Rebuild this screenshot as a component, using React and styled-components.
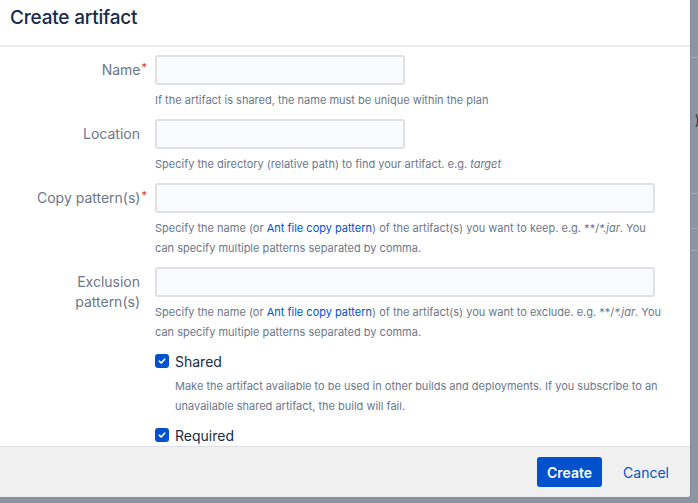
import styled, { createGlobalStyle } from "styled-components";

const GlobalStyle = createGlobalStyle`
  html, body {
    margin: 0;
    padding: 0;
    height: 100%;
    overflow: hidden;
  }
  body {
    font-family: Inter, "Noto Sans", "Liberation Sans", sans-serif;
    background: #ffffff;
  }
`;

/* page that sits behind the dimmed overlay */
const Backdrop = styled.div`
  position: fixed;
  inset: 0;
  background: #8d94a2;
  display: flex;
  flex-direction: column;
  align-items: flex-end;
`;

const BackRow = styled.div`
  width: 60px;
  height: ${(p) => p.h}px;
  box-sizing: border-box;
  border-bottom: 1px solid ${(p) => (p.line ? "#a0a6b1" : "transparent")};
  color: #2f3746;
  font-size: 14px;
  line-height: ${(p) => p.h}px;
  text-align: right;
  overflow: hidden;
  white-space: nowrap;
  margin-right: -6px;
`;

const Dialog = styled.div`
  position: fixed;
  left: 0;
  top: 0;
  width: 690px;
  height: 497px;
  background: #ffffff;
  border-bottom-right-radius: 3px;
  box-shadow: 0 0 2px rgba(9, 30, 66, 0.25);
  display: flex;
  flex-direction: column;
  overflow: hidden;
`;

const Header = styled.div`
  flex: none;
  height: 47px;
  padding: 6px 10px 0;
  box-sizing: border-box;
  border-bottom: 2px solid #ebecf0;
`;

const Title = styled.h1`
  margin: 0;
  font-size: 19px;
  line-height: 24px;
  font-weight: 500;
  color: #172b4d;
  letter-spacing: -0.2px;
`;

const Body = styled.div`
  flex: 1;
  overflow: hidden;
  padding: 8px 0 0;
`;

const FieldRow = styled.div`
  display: grid;
  grid-template-columns: 118px 512px;
  column-gap: 15px;
  padding-left: 22px;
  margin-bottom: 9px;
`;

const Label = styled.label`
  text-align: right;
  font-size: 14px;
  line-height: 20px;
  color: #6b778c;
  padding-top: 5px;
`;

const Req = styled.span`
  color: #de350b;
  font-size: 11px;
  vertical-align: top;
  line-height: 14px;
  margin-right: -7px;
  margin-left: 1px;
`;

const Input = styled.input`
  display: block;
  box-sizing: border-box;
  width: ${(p) => (p.wide ? 500 : 250)}px;
  height: 30px;
  margin: 0;
  background: #fafbfc;
  border: 2px solid #dfe1e6;
  border-radius: 3px;
  font: inherit;
  font-size: 14px;
  outline: none;
`;

const Help = styled.div`
  margin-top: 5px;
  font-size: 11px;
  line-height: 20px;
  color: #6b778c;
  padding-left: ${(p) => (p.indent ? 20 : 0)}px;

  a {
    color: #0052cc;
    text-decoration: none;
  }
  em {
    font-style: italic;
  }
`;

const CheckRow = styled.label`
  display: flex;
  align-items: center;
  gap: 6px;
  height: 20px;
  font-size: 14px;
  color: #172b4d;
`;

const Box = styled.span`
  width: 14px;
  height: 14px;
  border-radius: 3px;
  background: #0052cc;
  display: flex;
  align-items: center;
  justify-content: center;
`;

const Footer = styled.div`
  flex: none;
  height: 51px;
  box-sizing: border-box;
  background: #f0f0f0;
  border-top: 1px solid #dfe1e6;
  display: flex;
  align-items: center;
  justify-content: flex-end;
  padding: 0 11px 0 0;
  gap: 11px;
`;

const Button = styled.button`
  height: 30px;
  border: none;
  border-radius: 3px;
  font: inherit;
  font-size: 14px;
  padding: 0 10px;
  font-weight: ${(p) => (p.primary ? 600 : 400)};
  background: ${(p) => (p.primary ? "#0052cc" : "transparent")};
  color: ${(p) => (p.primary ? "#ffffff" : "#0052cc")};
  cursor: pointer;
`;

const Check = () => (
  <Box>
    <svg width="10" height="10" viewBox="0 0 10 10">
      <path
        d="M2.3 5.2 L4.2 7 L7.7 3.2"
        fill="none"
        stroke="#fff"
        strokeWidth="1.6"
        strokeLinecap="round"
        strokeLinejoin="round"
      />
    </svg>
  </Box>
);

const Field = ({ label, required, wide, children }) => (
  <FieldRow>
    <Label>
      {label}
      {required && <Req>*</Req>}
    </Label>
    <div>
      <Input wide={wide} />
      <Help>{children}</Help>
    </div>
  </FieldRow>
);

const CheckField = ({ label, children }) => (
  <FieldRow>
    <span />
    <div>
      <CheckRow>
        <Check />
        {label}
      </CheckRow>
      {children && <Help indent>{children}</Help>}
    </div>
  </FieldRow>
);

export default function App() {
  return (
    <>
      <GlobalStyle />
      <Backdrop>
        <BackRow h={58} line />
        <BackRow h={50} />
        <BackRow h={24}>).</BackRow>
        <BackRow h={13} />
        <BackRow h={24}>r</BackRow>
        <BackRow h={25} line />
        <BackRow h={35} line />
        <BackRow h={22} line />
      </Backdrop>
      <Dialog>
        <Header>
          <Title>Create artifact</Title>
        </Header>
        <Body>
          <Field label="Name" required>
            If the artifact is shared, the name must be unique within the plan
          </Field>
          <Field label="Location">
            Specify the directory (relative path) to find your artifact. e.g.{" "}
            <em>target</em>
          </Field>
          <Field label="Copy pattern(s)" required wide>
            Specify the name (or <a href="#">Ant file copy pattern</a>) of the
            artifact(s) you want to keep. e.g. **/<em>*.jar</em>. You can specify
            multiple patterns separated by comma.
          </Field>
          <Field label="Exclusion pattern(s)" wide>
            Specify the name (or <a href="#">Ant file copy pattern</a>) of the
            artifact(s) you want to exclude. e.g. **/<em>*.jar</em>. You can
            specify multiple patterns separated by comma.
          </Field>
          <CheckField label="Shared">
            Make the artifact available to be used in other builds and
            deployments. If you subscribe to an unavailable shared artifact, the
            build will fail.
          </CheckField>
          <CheckField label="Required" />
        </Body>
        <Footer>
          <Button primary>Create</Button>
          <Button>Cancel</Button>
        </Footer>
      </Dialog>
    </>
  );
}
